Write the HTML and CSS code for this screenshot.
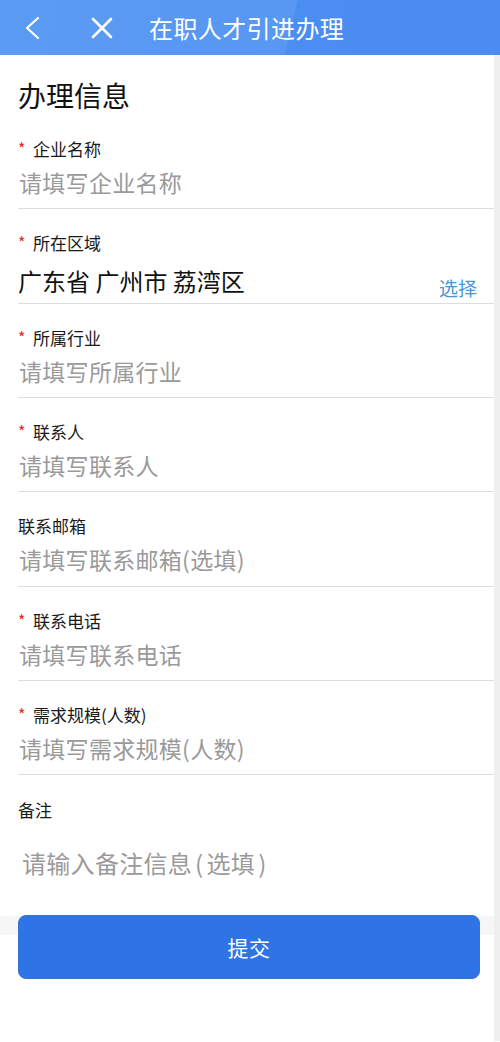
FILE: index.html
```html
<!DOCTYPE html>
<html lang="zh-CN">
<head>
<meta charset="utf-8">
<title>在职人才引进办理</title>
<link rel="stylesheet" href="styles.css">
</head>
<body>
<header class="topbar">
  <span class="icon-btn back">
    <svg width="18" height="24" viewBox="0 0 18 24"><path d="M15 2 L4 12 L15 22" fill="none" stroke="#fff" stroke-width="2.2" stroke-linecap="round" stroke-linejoin="round"/></svg>
  </span>
  <span class="icon-btn close">
    <svg width="24" height="24" viewBox="0 0 24 24"><path d="M3 3 L21 21 M21 3 L3 21" fill="none" stroke="#fff" stroke-width="2.6" stroke-linecap="round"/></svg>
  </span>
  <h1 class="topbar-title">在职人才引进办理</h1>
</header>
<div class="page">
  <main class="content">
    <h2 class="section-title">办理信息</h2>
    <div class="form">
      <div class="row">
        <div class="label"><span class="star">*</span>企业名称</div>
        <div class="value placeholder">请填写企业名称</div>
      </div>
      <div class="row row-region">
        <div class="label"><span class="star">*</span>所在区域</div>
        <div class="region">
          <span class="value filled">广东省 广州市 荔湾区</span>
          <span class="select">选择</span>
        </div>
      </div>
      <div class="row">
        <div class="label"><span class="star">*</span>所属行业</div>
        <div class="value placeholder">请填写所属行业</div>
      </div>
      <div class="row">
        <div class="label"><span class="star">*</span>联系人</div>
        <div class="value placeholder">请填写联系人</div>
      </div>
      <div class="row">
        <div class="label">联系邮箱</div>
        <div class="value placeholder">请填写联系邮箱(选填)</div>
      </div>
      <div class="row">
        <div class="label"><span class="star">*</span>联系电话</div>
        <div class="value placeholder">请填写联系电话</div>
      </div>
      <div class="row">
        <div class="label"><span class="star">*</span>需求规模(人数)</div>
        <div class="value placeholder">请填写需求规模(人数)</div>
      </div>
      <div class="remark">
        <div class="label">备注</div>
        <div class="remark-input">请输入备注信息<span class="paren">(</span>选填<span class="paren">)</span></div>
      </div>
    </div>
    <div class="footer">
      <div class="band"></div>
      <button class="submit" type="button">提交</button>
    </div>
  </main>
  <div class="scrollbar"></div>
</div>
</body>
</html>
```

FILE: styles.css
```css
html, body {
  margin: 0;
  padding: 0;
  background: #fff;
  font-family: "Noto Sans CJK SC", "Noto Sans", sans-serif;
}

.topbar {
  height: 55px;
  display: flex;
  align-items: center;
  background: linear-gradient(103deg, #5c9bf3 0, #5897f2 289px, #4b8df0 291px, #4a8cf0 100%);
  color: #fff;
}

.icon-btn {
  display: flex;
  align-items: center;
  justify-content: center;
}

.back {
  margin-left: 23px;
  width: 18px;
}

.close {
  margin-left: 49px;
  width: 24px;
}

.topbar-title {
  margin: 0 0 0 35px;
  font-size: 24px;
  font-weight: 400;
  line-height: 32px;
  letter-spacing: 0.4px;
}

.page {
  display: flex;
}

.content {
  width: 494px;
}

.scrollbar {
  width: 6px;
  background: #efefef;
}

.section-title {
  margin: 0;
  padding: 20px 0 0 18px;
  font-size: 28px;
  line-height: 40px;
  font-weight: 400;
  color: #111;
}

.form {
  padding-left: 18px;
}

.row {
  height: 94.33px;
  padding-top: 22px;
  box-sizing: border-box;
  border-bottom: 1px solid #dedede;
}

.label {
  font-size: 17px;
  line-height: 24px;
  color: #1a1a1a;
  display: flex;
  align-items: center;
}

.star {
  color: #e02a2a;
  font-size: 16px;
  width: 15px;
  position: relative;
  top: -1px;
}

.value {
  font-size: 23px;
  line-height: 34px;
  margin-top: 4px;
  letter-spacing: 0.3px;
}

.placeholder {
  color: #9a9a9a;
  padding-left: 1px;
}

.region {
  display: flex;
  align-items: flex-end;
  justify-content: space-between;
  margin-top: 4px;
  height: 39px;
  padding-right: 17px;
}

.filled {
  font-size: 24px;
  color: #111;
  margin-top: 0;
  line-height: 34px;
  letter-spacing: 0;
}

.select {
  font-size: 19px;
  line-height: 20px;
  color: #4b95d4;
}

.remark {
  height: 140px;
  padding-top: 23px;
  box-sizing: border-box;
}

.remark-input {
  margin-top: 21px;
  padding-left: 4px;
  font-size: 24px;
  line-height: 40px;
  color: #9a9a9a;
  letter-spacing: 0.3px;
}

.paren {
  padding: 0 3px;
}

.footer {
  display: grid;
  padding-bottom: 62px;
}

.band,
.submit {
  grid-area: 1 / 1;
}

.band {
  height: 19px;
  margin-top: 1px;
  background: #f6f6f6;
}

.submit {
  margin: 0 14px 0 18px;
  height: 64px;
  border: 1px solid #3a72cf;
  border-radius: 8px;
  background: #2f74e6;
  color: #fff;
  font-family: "Noto Sans CJK SC", "Noto Sans", sans-serif;
  font-size: 21px;
  letter-spacing: 0.5px;
}
```
